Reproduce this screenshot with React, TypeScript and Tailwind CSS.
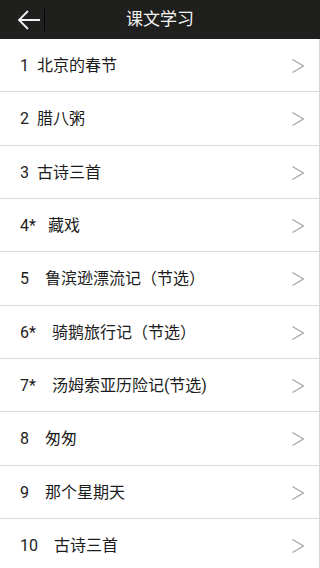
import React from "react";

type Lesson = {
  no: string;
  title: string;
  indent: string;
};

// indent is the gap between the number and the title, read off the screenshot
const lessons: Lesson[] = [
  { no: "1", title: "北京的春节", indent: "pl-[8px]" },
  { no: "2", title: "腊八粥", indent: "pl-[8px]" },
  { no: "3", title: "古诗三首", indent: "pl-[8px]" },
  { no: "4*", title: "藏戏", indent: "pl-[12px]" },
  { no: "5", title: "鲁滨逊漂流记（节选）", indent: "pl-[16px]" },
  { no: "6*", title: "骑鹅旅行记（节选）", indent: "pl-[16px]" },
  { no: "7*", title: "汤姆索亚历险记(节选)", indent: "pl-[16px]" },
  { no: "8", title: "匆匆", indent: "pl-[16px]" },
  { no: "9", title: "那个星期天", indent: "pl-[16px]" },
  { no: "10", title: "古诗三首", indent: "pl-[16px]" },
];

const Chevron: React.FC = () => (
  <svg width="14" height="16" viewBox="0 0 14 16" className="shrink-0">
    <polyline
      points="1.5,1.5 12.5,8 1.5,14.5"
      fill="none"
      stroke="#a0a0a0"
      strokeWidth="1.1"
    />
  </svg>
);

const BackArrow: React.FC = () => (
  <svg width="24" height="22" viewBox="0 0 24 22">
    <path
      d="M23 11H2M11 2L2 11l9 9"
      fill="none"
      stroke="#f2f2f2"
      strokeWidth="1.8"
    />
  </svg>
);

const LessonRow: React.FC<Lesson> = ({ no, title, indent }) => (
  <div className="flex h-[53.33px] items-center border-b border-[#dadada] pl-[20px] pr-[14px] pt-[2px]">
    <span className="text-[16px] text-[#1c1c1c]">{no}</span>
    <span className={`${indent} flex-1 text-[16px] text-[#1c1c1c]`}>{title}</span>
    <Chevron />
  </div>
);

export default function App() {
  return (
    <div
      className="h-[568px] w-[320px] overflow-hidden bg-white"
      style={{ fontFamily: 'Roboto, "Noto Sans CJK SC", sans-serif' }}
    >
      {/* Title bar */}
      <div className="relative flex h-[39px] items-center bg-[#1f1f1d]">
        <div className="flex items-center pl-[17px]">
          <BackArrow />
          <div className="ml-[3px] h-[22px] w-[1px] bg-[#050505]" />
        </div>
        <h1 className="absolute inset-x-0 text-center text-[17px] text-[#f4f4f4]">
          课文学习
        </h1>
      </div>

      {/* Lesson list */}
      <div className="border-r border-[#d6d6d6]">
        {lessons.map((l) => (
          <LessonRow key={l.no} {...l} />
        ))}
      </div>
    </div>
  );
}
